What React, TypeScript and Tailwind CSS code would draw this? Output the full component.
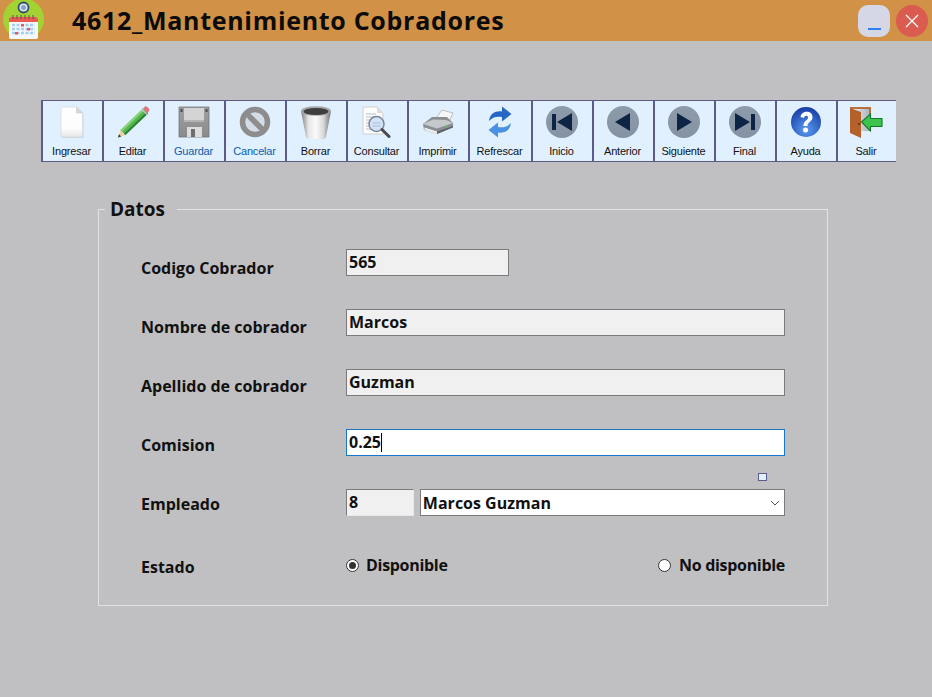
import React from "react";

function Round({ children, id }: { children: React.ReactNode; id: string }) {
  return (
    <svg width="34" height="34" viewBox="0 0 34 34">
      <defs>
        <linearGradient id={id} x1="0" x2="0" y1="0" y2="1">
          <stop offset="0" stopColor="#8e9baa" />
          <stop offset="1" stopColor="#8492a3" />
        </linearGradient>
      </defs>
      <circle cx="17" cy="17" r="16" fill={`url(#${id})`} />
      <g fill="#0d2445">{children}</g>
    </svg>
  );
}

const icons: Record<string, React.ReactNode> = {
  Ingresar: (
    <svg width="26" height="34" viewBox="0 0 26 34">
      <defs>
        <linearGradient id="pg" x1="0" x2="0" y1="0" y2="1">
          <stop offset="0" stopColor="#ffffff" />
          <stop offset="0.7" stopColor="#fdfdfd" />
          <stop offset="1" stopColor="#e6e6e6" />
        </linearGradient>
      </defs>
      <path d="M3 3h15.500l6 6v24H3z" fill="#b8c0c8" opacity="0.5" />
      <path d="M2 2h15.500l6 6v24H2z" fill="url(#pg)" stroke="#d4d8dc" strokeWidth="0.7" />
      <path d="M17.500 2v6h6z" fill="#d8d8d8" stroke="#c8c8c8" strokeWidth="0.6" />
    </svg>
  ),
  Editar: (
    <svg width="34" height="34" viewBox="0 0 34 34">
      <path d="M2 32.500l2.500-7.500 5 5z" fill="#e8d3a8" />
      <path d="M2 32.500l1-3.200 2.200 2.200z" fill="#333" />
      <path d="M4.500 25L27 3.500l5 5L9.500 30z" fill="#55b84f" />
      <path d="M4.500 25L27 3.500l1.400 1.400L6 26.500z" fill="#8ad67d" />
      <path d="M8 28.500L30.500 7l1.500 1.500L9.500 30z" fill="#2c8436" />
      <path d="M27 3.500l2-2q1-.6 2 .2l2 2q.8 1 .2 2l-2 2.800z" fill="#d9797a" />
      <path d="M26 4.500l5 5" stroke="#c4c4c4" strokeWidth="1.300" />
    </svg>
  ),
  Guardar: (
    <svg width="32" height="32" viewBox="0 0 32 32">
      <defs>
        <linearGradient id="fl" x1="0" x2="0" y1="0" y2="1">
          <stop offset="0" stopColor="#a0a0a0" />
          <stop offset="1" stopColor="#8a8a8a" />
        </linearGradient>
      </defs>
      <path d="M1 1h30v30H1z" fill="url(#fl)" />
      <path d="M1 1h30v30H1z" fill="none" stroke="#767676" strokeWidth="0.8" />
      <path d="M6 2h20v14H6z" fill="#d4d4d4" />
      <path d="M6 14h20v2H6z" fill="#b4b4b4" />
      <path d="M2.500 3h2v3h-2zM27.500 3h2v3h-2z" fill="#4a4a4a" />
      <path d="M9 21h15v10H9z" fill="#dcdcdc" />
      <path d="M13 23h4v8h-4z" fill="#6e6e6e" />
    </svg>
  ),
  Cancelar: (
    <svg width="32" height="32" viewBox="0 0 32 32">
      <circle cx="16" cy="16" r="12.500" fill="#d4dde6" stroke="#8d8d8d" strokeWidth="5.500" />
      <path d="M7.500 7.500l17 17" stroke="#8d8d8d" strokeWidth="5.500" />
    </svg>
  ),
  Borrar: (
    <svg width="32" height="34" viewBox="0 0 32 34">
      <defs>
        <linearGradient id="bin" x1="0" x2="1" y1="0" y2="0">
          <stop offset="0" stopColor="#7c7c7c" />
          <stop offset="0.25" stopColor="#e6e6e6" />
          <stop offset="0.5" stopColor="#fafafa" />
          <stop offset="0.75" stopColor="#d8d8d8" />
          <stop offset="1" stopColor="#707070" />
        </linearGradient>
      </defs>
      <path d="M1 6l5 26q.4 2 3 2h14q2.600 0 3-2l5-26z" fill="url(#bin)" />
      <ellipse cx="16" cy="6" rx="15" ry="4.800" fill="#a8a8a8" />
      <ellipse cx="16" cy="6.500" rx="12.500" ry="3.500" fill="#3e3e3e" />
    </svg>
  ),
  Consultar: (
    <svg width="30" height="32" viewBox="0 0 30 32">
      <path d="M1 1h14l6 6v21H1z" fill="#fdfdfd" stroke="#cfcfcf" />
      <path d="M15 1v6h6z" fill="#dedede" />
      <path d="M4 8h10M4 11h13M4 14h6M4 17h5M4 20h5M4 23h5" stroke="#b9bccd" />
      <circle cx="14.500" cy="18" r="7.500" fill="#d3e2f5" stroke="#76879a" strokeWidth="1.500" />
      <path d="M10.500 17h8M10.500 20h8" stroke="#a8bcd8" />
      <path d="M20 23.500l7 7" stroke="#4a4a4a" strokeWidth="3" strokeLinecap="round" />
    </svg>
  ),
  Imprimir: (
    <svg width="32" height="26" viewBox="0 0 32 26">
      <path d="M14 9L20 1l11 3-4 9z" fill="#f6f6f6" stroke="#8a8a8a" strokeWidth="0.5" />
      <path d="M1 15L10 8h15l6 6v4L15 25 2 21z" fill="#8b8f93" />
      <path d="M1 15l14 4.500L31 14l-7-3-13-.5z" fill="#c6c9cc" />
      <path d="M2.500 18.500L15 22.500v2.500L2.500 21z" fill="#efefef" />
      <path d="M15 22.500L31 17v1.500L15 25z" fill="#5f6266" />
      <path d="M24 17.200l2-.7" stroke="#5fc85f" strokeWidth="1.400" />
    </svg>
  ),
  Refrescar: (
    <svg width="24" height="32" viewBox="0 0 24 32">
      <path d="M1 15C2 7 8 4.500 14 5.500V0.500l9.500 7.500-9.500 7.500V11C8 10 4.500 11.500 1 15z" fill="#2766c4" />
      <path d="M23 17C22 25 16 27.500 10 26.500v5L0.500 24l9.500-7.500V21c6 1 9.500-.5 13-4z" fill="#4a90e4" />
    </svg>
  ),
  Inicio: (
    <Round id="r1">
      <path d="M7 9h4v16H7z" />
      <path d="M27 8v18L12 17z" />
    </Round>
  ),
  Anterior: (
    <Round id="r2">
      <path d="M24 8v18L9 17z" />
    </Round>
  ),
  Siguiente: (
    <Round id="r3">
      <path d="M10 8v18l15-9z" />
    </Round>
  ),
  Final: (
    <Round id="r4">
      <path d="M7 8v18l15-9z" />
      <path d="M23 9h4v16h-4z" />
    </Round>
  ),
  Ayuda: (
    <svg width="32" height="32" viewBox="0 0 32 32">
      <defs>
        <radialGradient id="help" cx="0.5" cy="0.75" r="0.8">
          <stop offset="0" stopColor="#5a9cf0" />
          <stop offset="1" stopColor="#1234a0" />
        </radialGradient>
      </defs>
      <circle cx="16" cy="16" r="15" fill="url(#help)" />
      <path d="M10.500 11c1-7 12-7 12 0 0 5-5 4.500-5 9h-4c0-6 4.500-5 4.500-8.500 0-2.500-3.500-2.500-4 .5z" fill="#fff" />
      <circle cx="15.500" cy="24" r="2.500" fill="#fff" />
    </svg>
  ),
  Salir: (
    <svg width="34" height="32" viewBox="0 0 34 32">
      <defs>
        <linearGradient id="ds" x1="0" x2="1" y1="0" y2="0">
          <stop offset="0" stopColor="#f4f6f8" />
          <stop offset="1" stopColor="#a9b4bc" />
        </linearGradient>
      </defs>
      <path d="M1 1h21v24H1z" fill="#b8703c" />
      <path d="M3 3h17v22H3z" fill="url(#ds)" />
      <path d="M1 2l11 4v26L1 27z" fill="#b5622a" />
      <path d="M10 17v2" stroke="#5b2c0f" strokeWidth="1.500" />
      <path d="M12.500 16l9-8v4.500H33v8H21.500V25z" fill="#3cc44d" stroke="#157a26" strokeWidth="1.100" />
    </svg>
  ),
};

const buttons: [string, string, string][] = [
  ["Ingresar", "w-[61px]", "text-[#111]"],
  ["Editar", "w-[61px]", "text-[#111]"],
  ["Guardar", "w-[61px]", "text-[#0b5cad]"],
  ["Cancelar", "w-[61px]", "text-[#0b5cad]"],
  ["Borrar", "w-[61px]", "text-[#111]"],
  ["Consultar", "w-[61px]", "text-[#111]"],
  ["Imprimir", "w-[61px]", "text-[#111]"],
  ["Refrescar", "w-[63px]", "text-[#111]"],
  ["Inicio", "w-[61px]", "text-[#111]"],
  ["Anterior", "w-[61px]", "text-[#111]"],
  ["Siguiente", "w-[61px]", "text-[#111]"],
  ["Final", "w-[61px]", "text-[#111]"],
  ["Ayuda", "w-[61px]", "text-[#111]"],
  ["Salir", "w-[60px]", "text-[#111]"],
];

function Label({ children, pad }: { children: React.ReactNode; pad: string }) {
  return <div className={`w-[205px] shrink-0 text-[16px] font-bold leading-[20px] text-[#111] ${pad}`}>{children}</div>;
}

const box = "h-[27px] border border-[#7a7a7a] bg-[#f0f0f0] px-[2px] text-[16px] font-bold leading-[24px] text-[#111]";

export default function App() {
  return (
    <div className="relative h-[697px] w-[932px] overflow-hidden bg-[#c0c0c2] font-['Open_Sans',sans-serif]">
      <header className="flex h-[41px] items-center overflow-hidden bg-[#d19146]">
        <svg className="ml-[3px] shrink-0" width="42" height="42" viewBox="0 0 42 42">
          <circle cx="20.500" cy="19" r="20.500" fill="#a3d332" />
          <circle cx="20.500" cy="7.500" r="5" fill="#dfe6ee" stroke="#34506a" strokeWidth="1.800" />
          <circle cx="20.500" cy="7.500" r="2.500" fill="#7fa6c8" />
          <rect x="6" y="17" width="29" height="22" rx="2" fill="#f4f8fc" />
          <path d="M6 19q0-2 2-2h25q2 0 2 2v3H6z" fill="#ea5a52" />
          <path d="M10 15v4M14 15v4M18 15v4M22 15v4M26 15v4M30 15v4" stroke="#555" />
          <path d="M9 25h23M9 29h23M9 33h23" stroke="#a7cdf0" strokeWidth="2.500" strokeDasharray="3 1.500" />
          <path d="M18 24h3v2.500h-3zM24 28h3v2.500h-3zM12 32h3v2.500h-3z" fill="#ea5a52" />
        </svg>
        <h1 className="ml-[27px] text-[25px] font-bold leading-none tracking-[0.7px] text-[#0b0b0b]">4612_Mantenimiento Cobradores</h1>
        <div className="ml-auto mr-[4px] flex items-center gap-[6px]">
          <div className="flex h-[32px] w-[32px] items-end justify-center rounded-[10px] bg-[#d5d6e6] pb-[7px]">
            <div className="h-[2px] w-[13px] bg-[#2f7fee]" />
          </div>
          <div className="flex h-[32px] w-[32px] items-center justify-center rounded-full bg-[#da5c50]">
            <svg width="14" height="14" viewBox="0 0 14 14">
              <path d="M1 1l12 12M13 1L1 13" stroke="#fff" strokeWidth="1.300" />
            </svg>
          </div>
        </div>
      </header>

      <nav className="ml-[41px] mt-[59px] flex h-[62px] w-[855px] border-y border-[#5d5b8c] bg-[#e0f0ff] font-['Liberation_Sans',Arial,sans-serif]">
        {buttons.map(([name, w, color]) => (
          <div key={name} className={`${w} flex h-full shrink-0 flex-col items-center border-l-2 border-[#5d5b8c] pr-[2px]`}>
            <div className="flex h-[42px] items-center justify-center">{icons[name]}</div>
            <span className={`mt-[1px] text-[11px] leading-[14px] tracking-[-0.2px] ${color}`}>{name}</span>
          </div>
        ))}
      </nav>

      <section className="relative ml-[98px] mt-[47px] h-[397px] w-[730px] border border-[#e2e2e4] px-[42px] pt-[39px]">
        <h2 className="absolute left-[6px] top-[-12px] w-[72px] bg-[#c0c0c2] pl-[5px] text-[19px] font-bold leading-[22px] text-[#111]">Datos</h2>
        <div className="absolute left-[659px] top-[263px] h-[8px] w-[9px] border border-[#5d5b8c] bg-[#e0f0ff]" />

        <div className="flex flex-col gap-[33px]">
          <div className="flex h-[27px]">
            <Label pad="pt-[9px]">Codigo Cobrador</Label>
            <div className={`${box} w-[163px]`}>565</div>
          </div>
          <div className="flex h-[27px]">
            <Label pad="pt-[8px]">Nombre de cobrador</Label>
            <div className={`${box} w-[440px]`}>Marcos</div>
          </div>
          <div className="flex h-[27px]">
            <Label pad="pt-[7px]">Apellido de cobrador</Label>
            <div className={`${box} w-[440px]`}>Guzman</div>
          </div>
          <div className="flex h-[27px]">
            <Label pad="pt-[6px]">Comision</Label>
            <div className={`${box} flex w-[440px] items-start !border-[#1977c9] !bg-white`}>
              0.25
              <span className="mt-[3px] h-[19px] w-px bg-black" />
            </div>
          </div>
          <div className="flex h-[27px]">
            <Label pad="pt-[5px]">Empleado</Label>
            <div className={`${box} w-[68px] !border-r-[#e8e8e8] !border-b-[#e8e8e8]`}>8</div>
            <div className={`${box} ml-[6px] flex w-[366px] items-center justify-between !bg-white`}>
              <span>Marcos Guzman</span>
              <svg className="mr-[2px]" width="10" height="6" viewBox="0 0 10 6">
                <path d="M1 1l4 4 4-4" fill="none" stroke="#555" />
              </svg>
            </div>
          </div>
          <div className="flex h-[27px]">
            <Label pad="pt-[8px]">Estado</Label>
            <div className="flex h-[26px] w-[440px] items-center justify-between pt-[6px] text-[16px] font-bold leading-[20px] tracking-[-0.3px] text-[#111]">
              <div className="flex items-center gap-[7px]">
                <span className="flex h-[13px] w-[13px] items-center justify-center rounded-full border border-[#333] bg-white">
                  <span className="h-[7px] w-[7px] rounded-full bg-[#333]" />
                </span>
                Disponible
              </div>
              <div className="flex items-center gap-[8px]">
                <span className="h-[13px] w-[13px] rounded-full border border-[#333] bg-white" />
                No disponible
              </div>
            </div>
          </div>
        </div>
      </section>
    </div>
  );
}
